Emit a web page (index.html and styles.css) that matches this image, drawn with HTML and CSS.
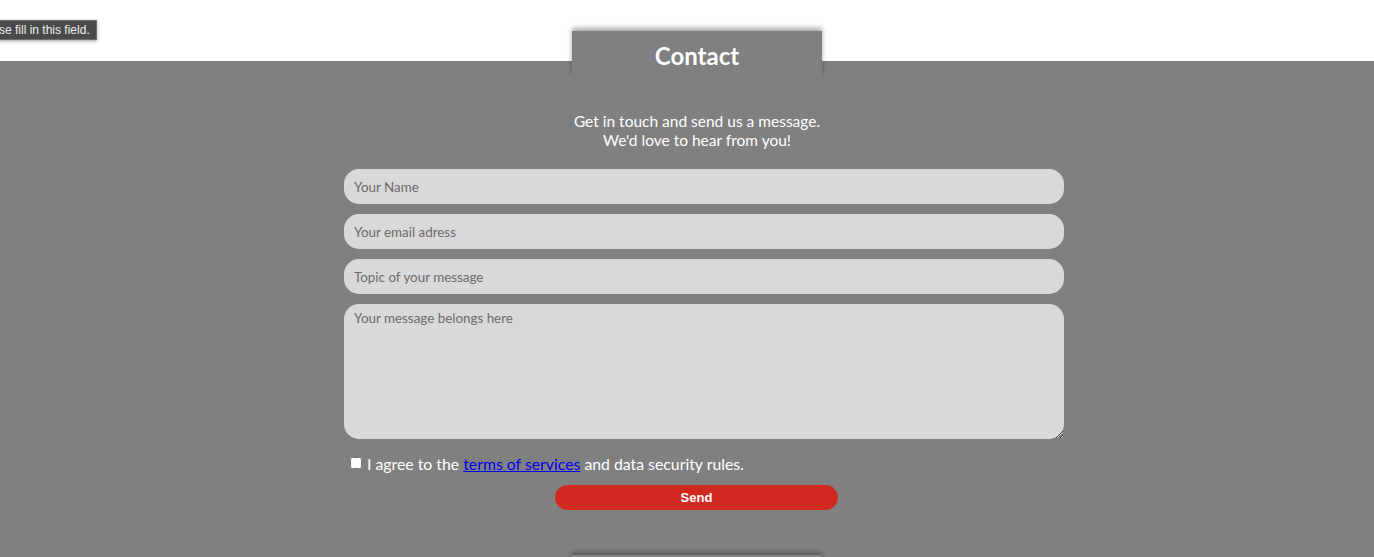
FILE: index.html
```html
<!DOCTYPE html>
<html>
<head>
<meta charset="utf-8">
<link rel="stylesheet" href="styles.css">
</head>
<body>
<div class="topbar"></div>
<section class="contact">
  <h2 class="tab">Contact</h2>
  <p class="intro">Get in touch and send us a message.<br>We'd love to hear from you!</p>
  <form class="form">
    <input class="field" type="text" placeholder="Your Name">
    <input class="field" type="email" placeholder="Your email adress">
    <input class="field" type="text" placeholder="Topic of your message">
    <textarea class="field area" placeholder="Your message belongs here"></textarea>
    <label class="agree"><input type="checkbox" class="check"> I agree to the <a href="#">terms of services</a> and data security rules.</label>
    <button type="button" class="send">Send</button>
  </form>
  <div class="nexttab"></div>
</section>
<div class="tooltip">Please fill in this field.</div>
</body>
</html>
```
FILE: styles.css
```css
html, body { margin: 0; padding: 0; }
body { font-family: Lato, "Open Sans", sans-serif; background: #808080; overflow: hidden; height: 557px; }
.topbar { height: 61px; background: #fff; }
.contact { background: #808080; display: flex; flex-direction: column; align-items: center; height: 496px; position: relative; padding-left: 20px; }
.tab {
  width: 250px; height: 46px; margin: -30px 0 0 0; box-sizing: border-box;
  background: #808080; color: #fff; font-weight: 700; font-size: 24px;
  display: flex; align-items: center; justify-content: center; padding-top: 2px;
  box-shadow: 0 -3px 5px rgba(0,0,0,0.35);
}
.intro { margin: 35px 0 0; color: #fff; font-size: 15.5px; line-height: 19px; text-align: center; }
.form { width: 720px; display: flex; flex-direction: column; align-items: stretch; gap: 10px; margin: 19px 0 0 14px; }
.field {
  height: 35px; border: none; border-radius: 15px; background: #d9d9d9; box-sizing: border-box;
  padding: 0 10px; font-family: Lato, sans-serif; font-size: 13.4px; color: #333; outline: none; margin: 0;
}
.field::placeholder { color: #6b6b6b; }
.area { height: 135px; padding-top: 6px; resize: vertical; }
.agree { color: #fff; font-size: 15.8px; display: flex; align-items: center; margin-top: 5px; padding-left: 5px; white-space: pre; }
.agree a { color: #0000ee; text-decoration: underline; }
.check { width: 12px; height: 12px; margin: 0 1px 2px 1px; }
.send {
  align-self: center; width: 283px; height: 25px; border: none; border-radius: 13px;
  background: #d02920; color: #fff; font-family: "Liberation Sans", Arial, sans-serif; font-size: 13px;
  font-weight: 700; margin: 2px 15px 0 0; padding: 0;
}
.nexttab { width: 250px; height: 10px; margin-top: auto; background: #858585; box-shadow: 0 -3px 5px rgba(0,0,0,0.3); flex: none; transform: translateY(8px); }
.tooltip {
  position: absolute; top: 20px; left: -32px; background: #4a4a4a; color: #eee;
  font-family: "Liberation Sans", Arial, sans-serif; font-size: 12px; line-height: 18px;
  padding: 0 6px; border: 1px solid #6e6e6e; box-shadow: 0 1px 3px rgba(0,0,0,0.4);
}
```
